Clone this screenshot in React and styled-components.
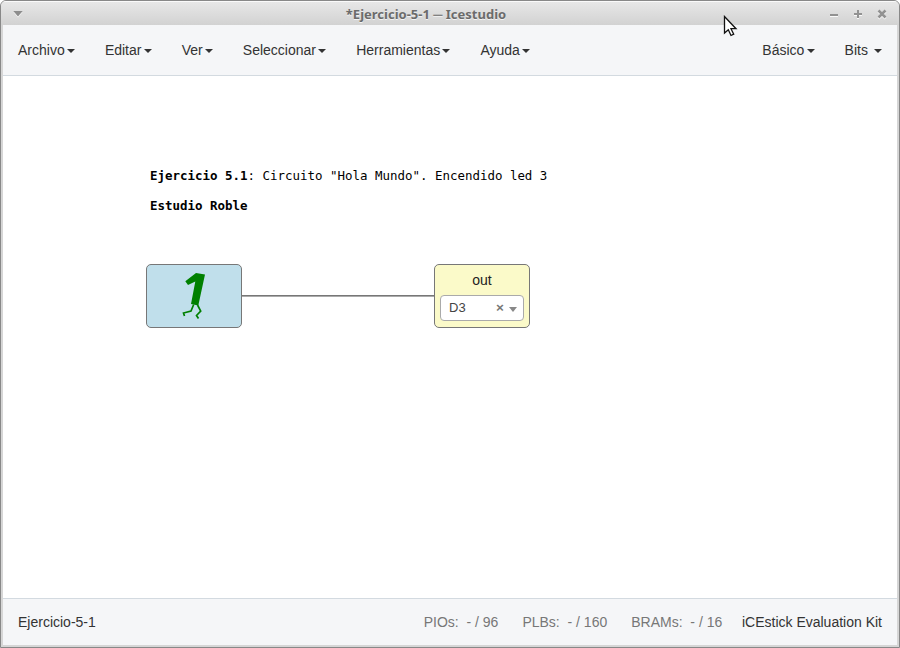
import React from "react";
import styled, { createGlobalStyle } from "styled-components";

const GlobalStyle = createGlobalStyle`
  * { box-sizing: border-box; }
  body {
    margin: 0;
    background: #fff;
    overflow: hidden;
    font: 14px/20px "Liberation Sans", Arial, sans-serif;
    color: #333;
  }
`;

const Window = styled.div`
  display: flex;
  flex-direction: column;
  width: 900px;
  height: 648px;
  border: 1px solid #888;
  border-radius: 6px 6px 0 0;
  background: #d6d6d6;
  overflow: hidden;
`;

const TitleBar = styled.header`
  display: grid;
  grid-template-columns: 52px 1fr 100px;
  align-items: center;
  flex: none;
  height: 24px;
  border-top: 1px solid #fafafa;
  background: linear-gradient(#e7e7e7, #d2d2d2);
`;

const WindowMenu = styled.svg`
  display: block;
  margin-left: 12px;
`;

const Title = styled.h1`
  margin: 1px 0 0;
  text-align: center;
  white-space: nowrap;
  font: bold 13px/20px "Noto Sans", sans-serif;
  color: #6b6b6b;
  text-shadow: 0 1px 0 #f2f2f2;
`;

const WindowControls = styled.svg`
  display: block;
  justify-self: end;
  margin-right: 10px;
`;

const Content = styled.div`
  display: flex;
  flex-direction: column;
  flex: 1;
  min-height: 0;
  margin: 0 2px 2px;
  background: #fff;
`;

const MenuBar = styled.nav`
  display: flex;
  justify-content: space-between;
  flex: none;
  height: 51px;
  background: #f5f6f8;
  border-bottom: 1px solid #d3dae0;
`;

const MenuGroup = styled.div`
  display: flex;
`;

const MenuItem = styled.div`
  display: flex;
  align-items: center;
  padding: 0 15px;
  white-space: pre;
`;

const Caret = styled.span`
  margin: 2px 0 0 2.2px;
  border: 4px solid transparent;
  border-top-color: #333;
  border-bottom: 0;
`;

const SelectArrow = styled.span`
  margin-top: 3px;
  border: 4px solid transparent;
  border-top: 5px solid #888;
  border-bottom: 0;
`;

const Canvas = styled.main`
  position: relative;
  flex: 1;
`;

const Note = styled.div`
  position: absolute;
  left: 147px;
  top: 92px;
  color: #000;
  white-space: pre;
  font: 12.46px/15px "DejaVu Sans Mono", monospace;
`;

const NoteLine = styled.p`
  margin: 0 0 15px;
`;

const Wire = styled.div`
  position: absolute;
  left: 238px;
  top: 219px;
  width: 194px;
  height: 2px;
  background: linear-gradient(#777 50%, #aaa 50%);
`;

const Block = styled.div`
  position: absolute;
  left: ${(p) => p.$x}px;
  top: 188px;
  display: flex;
  flex-direction: column;
  align-items: center;
  width: 96px;
  height: 64px;
  border: 1px solid #777;
  border-radius: 5px;
  background: ${(p) => p.$fill};
`;

const OneFigure = styled.svg`
  display: block;
  margin-top: 3px;
`;

const PortName = styled.div`
  margin-top: 5px;
  color: #222;
`;

const PinSelect = styled.div`
  display: flex;
  align-items: center;
  width: 84px;
  height: 26px;
  margin-top: 5px;
  padding: 0 6px 0 8px;
  border: 1px solid #aaa;
  border-radius: 4px;
  background: #fff;
  color: #444;
  font-size: 13px;
`;

const ClearMark = styled.span`
  margin: 0 5px 0 auto;
  color: #777;
  font-size: 13.5px;
  font-weight: bold;
`;

const StatusBar = styled.footer`
  display: flex;
  align-items: center;
  flex: none;
  height: 47px;
  padding: 0 15px;
  background: #f5f6f8;
  border-top: 1px solid #d3dae0;
  white-space: pre;
`;

const Stats = styled.div`
  display: flex;
  gap: 24px;
  margin: 0 19.7px 0 auto;
  color: #777;
`;

const Pointer = styled.svg`
  position: absolute;
  left: 723px;
  top: 15px;
`;

const mainMenus = ["Archivo", "Editar", "Ver", "Seleccionar", "Herramientas", "Ayuda"];
const sideMenus = ["Básico", "Bits "];
const resources = ["PIOs:  - / 96", "PLBs:  - / 160", "BRAMs:  - / 16"];

const Menus = ({ items }) => (
  <MenuGroup>
    {items.map((label) => (
      <MenuItem key={label}>{label}<Caret /></MenuItem>
    ))}
  </MenuGroup>
);

export default function App() {
  return (
    <>
      <GlobalStyle />
      <Window>
        <TitleBar>
          <WindowMenu width="10" height="8">
            <path d="M.5 2H9.5L5 7.6Z" fill="#fafafa" />
            <path d="M.3 1H9.7L5 6.6Z" fill="#8d8d8d" />
          </WindowMenu>
          <Title>*Ejercicio-5-1 ─ Icestudio</Title>
          <WindowControls width="60" height="12" fill="none" strokeWidth="2">
            <path d="M1 8H9M25 7H33M29 3V11" stroke="#fafafa" />
            <path d="M49.5 3.5L56.5 10.5M56.5 3.5L49.5 10.5" stroke="#fafafa" strokeWidth="2.5" />
            <path d="M1 7H9M25 6H33M29 2V10" stroke="#929292" />
            <path d="M49.5 2.5L56.5 9.5M56.5 2.5L49.5 9.5" stroke="#929292" strokeWidth="2.5" />
          </WindowControls>
        </TitleBar>
        <Content>
          <MenuBar>
            <Menus items={mainMenus} />
            <Menus items={sideMenus} />
          </MenuBar>
          <Canvas>
            <Note>
              <NoteLine><b>Ejercicio 5.1</b>: Circuito "Hola Mundo". Encendido led 3</NoteLine>
              <NoteLine><b>Estudio Roble</b></NoteLine>
            </Note>
            <Wire />
            <Block $x={143} $fill="#c0dfeb">
              <OneFigure width="36" height="56" viewBox="176 268 36 56">
                <path d="M196 273L205 274.5L198.3 305.5L191 304L195.3 281.5L188 285L185.3 281.2Z" fill="green" />
                <path d="M193.7 304.5L191 311L183.5 313L184.5 316M197.5 305L200.7 311L196.5 315.5L198.5 318.5" fill="none" stroke="green" strokeWidth="1.7" />
              </OneFigure>
            </Block>
            <Block $x={431} $fill="#fbfac9">
              <PortName>out</PortName>
              <PinSelect>
                D3
                <ClearMark>×</ClearMark>
                <SelectArrow />
              </PinSelect>
            </Block>
          </Canvas>
          <StatusBar>
            <span>Ejercicio-5-1</span>
            <Stats>
              {resources.map((text) => <span key={text}>{text}</span>)}
            </Stats>
            <span>iCEstick Evaluation Kit</span>
          </StatusBar>
        </Content>
      </Window>
      <Pointer width="16" height="24" viewBox="0 0 16 24">
        <path d="M1.5 1.5V18L5.3 14.7L8 20.5L10.7 19.2L8 13.7H13Z" fill="#fff" stroke="#111" strokeWidth="1.3" />
      </Pointer>
    </>
  );
}
